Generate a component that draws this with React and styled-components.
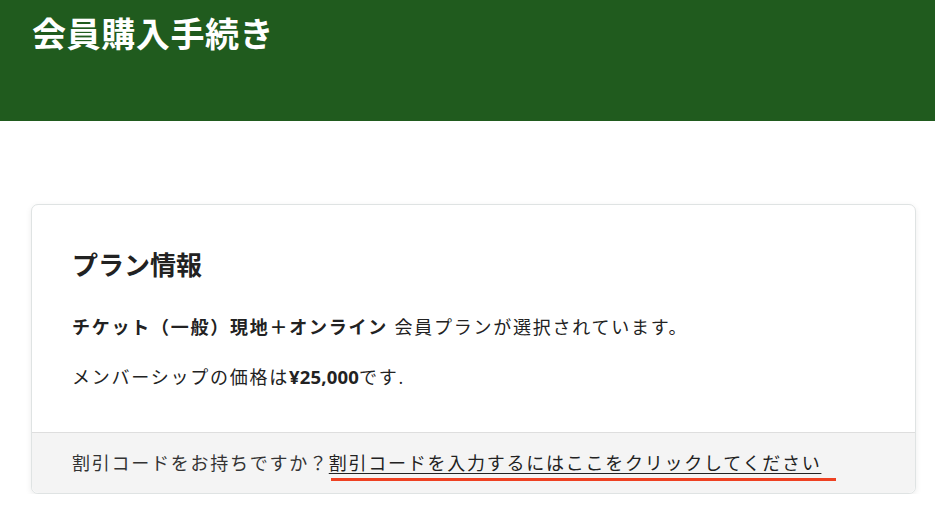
import React from "react";
import styled, { createGlobalStyle } from "styled-components";

const GlobalStyle = createGlobalStyle`
  body {
    margin: 0;
    background: #ffffff;
    font-family: "Open Sans", "Noto Sans CJK JP", sans-serif;
    color: #222222;
  }
`;

const Header = styled.header`
  height: 121px;
  background-color: #205b1e;
  padding: 12px 32px 0;
  box-sizing: border-box;
`;

const PageTitle = styled.h1`
  margin: 0;
  font-size: 34px;
  line-height: 44px;
  font-weight: 700;
  letter-spacing: 0.6px;
  color: #ffffff;
`;

const Main = styled.main`
  padding: 83px 19px 0 31px;
`;

const Card = styled.section`
  border: 1px solid #dfe3e3;
  border-radius: 7px;
  background: #ffffff;
  box-shadow: 0 2px 6px rgba(0, 0, 0, 0.08);
`;

const CardBody = styled.div`
  padding: 42px 40px 40px;
`;

const CardTitle = styled.h2`
  margin: 0 0 30px;
  font-size: 26px;
  line-height: 36px;
  font-weight: 700;
  color: #222222;
`;

const Line = styled.p`
  margin: 0 0 20px;
  font-size: 18px;
  line-height: 29px;
  letter-spacing: 1.75px;
  color: #222222;

  &:last-child {
    margin-bottom: 0;
  }

  b {
    font-weight: 700;
  }
`;

const Price = styled.b`
  font-size: 18.5px;
  letter-spacing: 0.2px;
`;

const CardFooter = styled.div`
  border-top: 1px solid #dedede;
  background: #f4f4f4;
  border-radius: 0 0 7px 7px;
  padding: 16px 40px;
  font-size: 18px;
  line-height: 28px;
  letter-spacing: 1.75px;
  color: #333333;
`;

const CodeLink = styled.a`
  position: relative;
  color: #222222;
  text-decoration: underline;
  text-underline-offset: 3px;
  cursor: pointer;

  &::after {
    content: "";
    position: absolute;
    left: 2px;
    right: -15px;
    bottom: -6px;
    height: 3px;
    background: #ee4122;
  }
`;

export default function App() {
  return (
    <>
      <GlobalStyle />
      <Header>
        <PageTitle>会員購入手続き</PageTitle>
      </Header>
      <Main>
        <Card>
          <CardBody>
            <CardTitle>プラン情報</CardTitle>
            <Line>
              <b>チケット（一般）現地＋オンライン</b> 会員プランが選択されています。
            </Line>
            <Line>
              メンバーシップの価格は<Price>¥25,000</Price>です.
            </Line>
          </CardBody>
          <CardFooter>
            割引コードをお持ちですか？
            <CodeLink>割引コードを入力するにはここをクリックしてください</CodeLink>
          </CardFooter>
        </Card>
      </Main>
    </>
  );
}
